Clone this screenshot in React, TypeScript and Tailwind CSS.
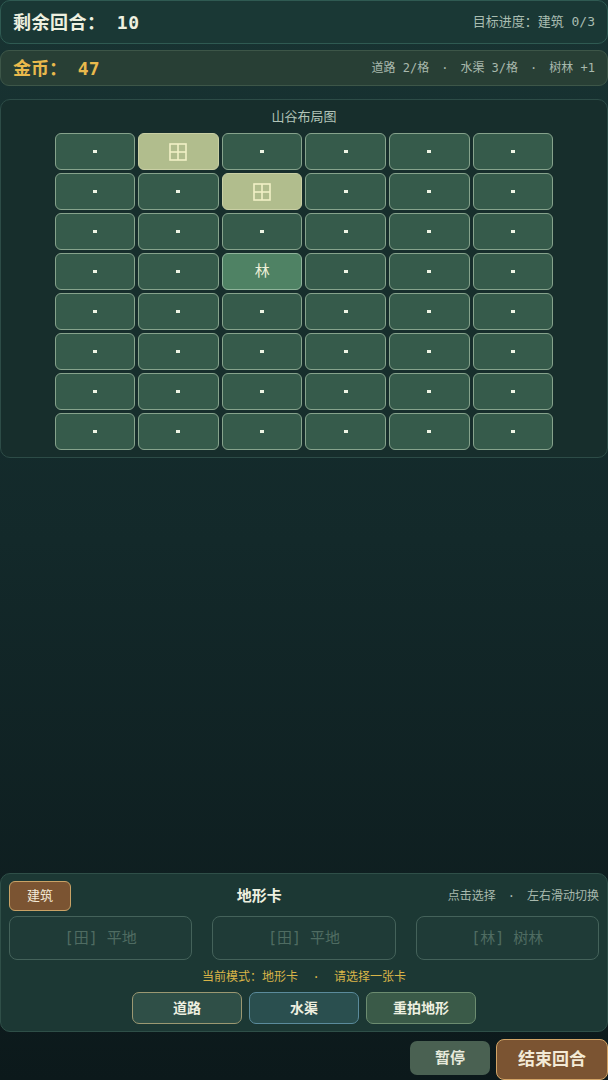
const FONT = { fontFamily: '"DejaVu Sans Mono", "Noto Sans CJK SC", monospace' };

type Cell = "empty" | "farm" | "forest";

const grid: Cell[][] = Array.from({ length: 8 }, () => Array(6).fill("empty"));
grid[0][1] = "farm";
grid[1][2] = "farm";
grid[3][2] = "forest";

function FarmIcon() {
  return (
    <svg width="18" height="18" viewBox="0 0 18 18" fill="none" stroke="#f2f0c6" strokeWidth="1.6">
      <rect x="1" y="1" width="16" height="16" />
      <line x1="9" y1="1" x2="9" y2="17" />
      <line x1="1" y1="9" x2="17" y2="9" />
    </svg>
  );
}

function MapCell({ kind }: { kind: Cell }) {
  if (kind === "farm") {
    return (
      <div className="h-[37px] rounded-[6px] border-[1.5px] border-[#c9cfa4] bg-[#b1bd8d] flex items-center justify-center">
        <FarmIcon />
      </div>
    );
  }
  if (kind === "forest") {
    return (
      <div className="h-[37px] rounded-[6px] border-[1.5px] border-[#8fb49a] bg-[#4f8264] flex items-center justify-center text-[15px] text-[#eef0d8]">
        林
      </div>
    );
  }
  return (
    <div className="h-[37px] rounded-[6px] border-[1.5px] border-[#86a38c] bg-[#365b4b] flex items-center justify-center">
      <div className="w-1 h-[3px] bg-[#eef4e4]" />
    </div>
  );
}

export default function App() {
  return (
    <main
      style={FONT}
      className="w-[608px] h-[1080px] overflow-hidden flex flex-col bg-gradient-to-b from-[#183332] via-[#13292a] to-[#0c191b]"
    >
      {/* Turn bar */}
      <header className="h-[44px] shrink-0 rounded-[10px] border border-[#2f5a52] bg-[#1a3835] flex items-center justify-between px-3">
        <h1 className="text-[18px] font-bold text-[#eef0e0] tracking-[0.5px]">剩余回合： 10</h1>
        <span className="text-[13px] text-[#a9bdb1]">目标进度：建筑 0/3</span>
      </header>

      {/* Gold bar */}
      <div className="mt-[6px] h-[36px] shrink-0 rounded-[9px] border border-[#3d5648] bg-[#283f35] flex items-center justify-between px-3">
        <span className="text-[18px] font-bold text-[#e9b94c]">金币： 47</span>
        <span className="text-[12px] text-[#a8b9ad] flex gap-3">
          <span>道路 2/格</span>
          <span>·</span>
          <span>水渠 3/格</span>
          <span>·</span>
          <span>树林 +1</span>
        </span>
      </div>

      {/* Map */}
      <section className="mt-[13px] shrink-0 rounded-[10px] border border-[#2d4c47] bg-[#172e2c] pt-[8px] pb-[7px] flex flex-col items-center">
        <div className="text-[13px] leading-[18px] text-[#b2c4b8] mb-[7px]">山谷布局图</div>
        <div className="w-[499px] grid grid-cols-6 gap-[3px]">
          {grid.flatMap((row, r) => row.map((c, i) => <MapCell key={`${r}-${i}`} kind={c} />))}
        </div>
      </section>

      <div className="flex-1" />

      {/* Card panel */}
      <section className="shrink-0 rounded-[10px] border border-[#2f4f48] bg-[#1c3834] px-2 pt-[7px] pb-[7px]">
        <div className="flex items-center">
          <button className="w-[62px] h-[30px] rounded-[6px] border border-[#c9a266] bg-[#7b5432] text-[13px] text-[#f3ead6]">
            建筑
          </button>
          <div className="flex-1 text-center text-[15px] font-bold text-[#eef0e0]">地形卡</div>
          <span className="text-[12px] text-[#a8b9ad] flex gap-3">
            <span>点击选择</span>
            <span>·</span>
            <span>左右滑动切换</span>
          </span>
        </div>

        <div className="mt-[5px] grid grid-cols-3 gap-5">
          {["[田] 平地", "[田] 平地", "[林] 树林"].map((t, i) => (
            <div
              key={i}
              className="h-[44px] rounded-[8px] border-[1.5px] border-[#44625a] bg-[#1f3b37] flex items-center justify-center text-[15px] text-[#4f6c62]"
            >
              {t}
            </div>
          ))}
        </div>

        <div className="mt-[9px] text-center text-[12px] leading-[16px] text-[#d9b548]">
          当前模式：地形卡 &nbsp;·&nbsp; 请选择一张卡
        </div>

        <div className="mt-[7px] flex justify-center gap-[7px]">
          <button className="w-[110px] h-[32px] rounded-[7px] border-[1.5px] border-[#9b9872] bg-[#2f4f47] text-[14px] font-bold text-[#eef0e0]">
            道路
          </button>
          <button className="w-[110px] h-[32px] rounded-[7px] border-[1.5px] border-[#5b8b9c] bg-[#2a4f4f] text-[14px] font-bold text-[#eef0e0]">
            水渠
          </button>
          <button className="w-[110px] h-[32px] rounded-[7px] border-[1.5px] border-[#6c8c70] bg-[#3a5a48] text-[14px] font-bold text-[#eef0e0]">
            重拍地形
          </button>
        </div>
      </section>

      {/* Footer actions */}
      <footer className="shrink-0 mt-[7px] h-[41px] flex items-start justify-end gap-[6px]">
        <button className="mt-[2px] w-[80px] h-[34px] rounded-[7px] bg-[#4a6152] text-[15px] font-bold text-[#e6eadc]">
          暂停
        </button>
        <button className="w-[112px] h-[41px] rounded-[8px] border-[1.5px] border-[#d2a466] bg-[#7b5432] text-[17px] font-bold text-[#f3ead6]">
          结束回合
        </button>
      </footer>
    </main>
  );
}
